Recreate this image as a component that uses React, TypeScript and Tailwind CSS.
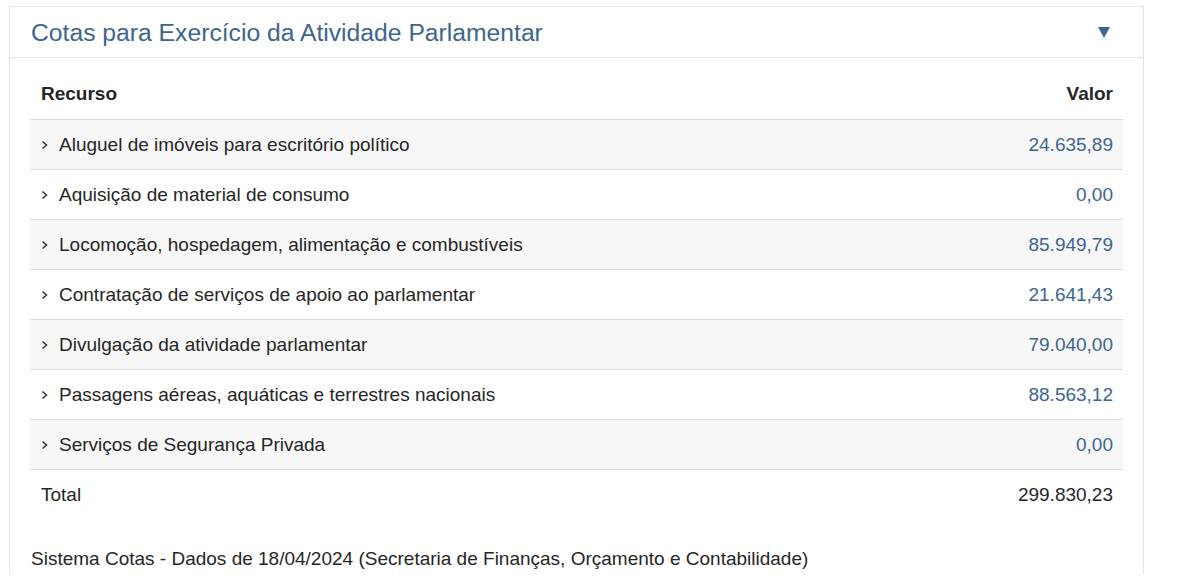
const rows = [
  { label: "Aluguel de imóveis para escritório político", value: "24.635,89" },
  { label: "Aquisição de material de consumo", value: "0,00" },
  { label: "Locomoção, hospedagem, alimentação e combustíveis", value: "85.949,79" },
  { label: "Contratação de serviços de apoio ao parlamentar", value: "21.641,43" },
  { label: "Divulgação da atividade parlamentar", value: "79.040,00" },
  { label: "Passagens aéreas, aquáticas e terrestres nacionais", value: "88.563,12" },
  { label: "Serviços de Segurança Privada", value: "0,00" },
];

function Chevron() {
  return (
    <svg width="8" height="10" viewBox="0 0 8 10" className="mr-[10px] shrink-0">
      <polyline points="1.5,1.5 5.5,5 1.5,8.5" fill="none" stroke="#333" strokeWidth="1.5" />
    </svg>
  );
}

export default function App() {
  return (
    <div className="min-h-[585px] bg-white pt-[6px] pl-[9px] font-['Liberation_Sans',Arial,sans-serif] text-[#262626]">
      <div className="w-[1135px] border border-[#e3e3e3] border-b-0">
        {/* Header */}
        <div className="flex h-[51px] items-center justify-between border-b border-[#e3e3e3] pl-[21px] pr-[33px]">
          <h2 className="pt-[2px] text-[24.7px] text-[#3d6590]">Cotas para Exercício da Atividade Parlamentar</h2>
          <svg width="12" height="11" viewBox="0 0 12 11">
            <polygon points="0,0 12,0 6,11" fill="#3d6590" />
          </svg>
        </div>

        <div className="px-[20px] pt-[10px]">
          <table className="w-full border-collapse text-[19px]">
            <thead>
              <tr className="h-[51px] border-b border-[#dcdcdc]">
                <th className="pl-[11px] pt-[2px] text-left font-bold">Recurso</th>
                <th className="pr-[10px] pt-[2px] text-right font-bold">Valor</th>
              </tr>
            </thead>
            <tbody>
              {rows.map((row, i) => (
                <tr key={row.label} className={`h-[50px] border-b border-[#dcdcdc] ${i % 2 === 0 ? "bg-[#f7f7f7]" : "bg-white"}`}>
                  <td className="pl-[11px] pt-[2px]">
                    <div className="flex items-center">
                      <Chevron />
                      {row.label}
                    </div>
                  </td>
                  <td className="pr-[10px] pt-[2px] text-right text-[#3d6590]">{row.value}</td>
                </tr>
              ))}
              <tr className="h-[50px]">
                <td className="pl-[11px] pt-[2px]">Total</td>
                <td className="pr-[10px] pt-[2px] text-right">299.830,23</td>
              </tr>
            </tbody>
          </table>
          <p className="mt-[26px] pl-px text-[19px]">
            Sistema Cotas - Dados de 18/04/2024 (Secretaria de Finanças, Orçamento e Contabilidade)
          </p>
        </div>
      </div>
    </div>
  );
}
